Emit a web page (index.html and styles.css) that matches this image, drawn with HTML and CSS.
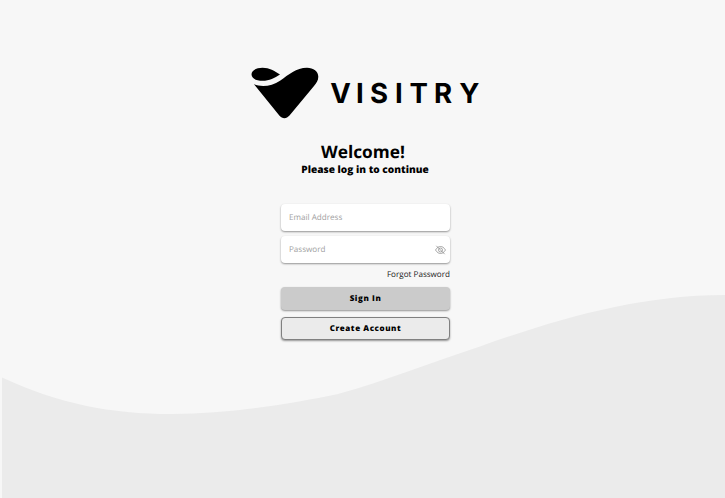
FILE: index.html
```
<!DOCTYPE html>
<html lang="en">
<head>
<meta charset="utf-8">
<title>Visitry – Log in</title>
<link rel="stylesheet" href="styles.css">
</head>
<body>
<svg class="wave" viewBox="0 0 725 498" aria-hidden="true"><path d="M2 377.5C60 404 110 414 172 414C230 414 290 404 338 394C385 381 430 363 480 346.5C560 318 640 295 725 295V498H2Z"/></svg>
<main class="login">
  <svg class="logo" viewBox="250 66 232 54" role="img" aria-label="Visitry">
    <path d="M251.5 74.3C251.5 70 257 67.7 262.5 67.7C269.5 67.7 274.5 71 280 74.4C274.5 77.7 269.5 80.8 262.5 80.8C256.5 80.8 251.5 78.5 251.5 74.3Z"/>
    <path d="M254 84.3C261.5 87.3 272 86.3 280 80.7C289 74.5 296 67.7 307 67.7C313.5 67.7 318.3 71.3 318.3 76.7C318.3 80.6 316.3 83.2 313.8 86.2L289.5 115.6C286.5 119 282.3 119 279.5 115.7Z"/>
    <text class="wordmark" y="103" x="330.3 355.9 370 394.9 409.4 434 459.3">VISITRY</text>
  </svg>
  <h1 class="title">Welcome!</h1>
  <p class="subtitle">Please log in to continue</p>
  <form class="form">
    <label class="field"><input class="input" type="text" placeholder="Email Address"></label>
    <label class="field"><input class="input" type="password" placeholder="Password">
      <svg class="eye" viewBox="0 0 11 10"><path d="M.5 5C2.2 2.3 3.8 1.5 5.5 1.5S8.8 2.3 10.5 5C8.8 7.7 7.2 8.5 5.5 8.5S2.2 7.7 .5 5ZM1.3.8L9.7 9.2"/><circle cx="5.5" cy="5" r="2"/></svg>
    </label>
    <a class="forgot">Forgot Password</a>
    <button class="button primary" type="button">Sign In</button>
    <button class="button secondary" type="button">Create Account</button>
  </form>
</main>
</body>
</html>
```
FILE: styles.css
```
* { box-sizing: border-box; }
body {
  margin: 0;
  height: 498px;
  overflow: hidden;
  background: #f7f7f7;
  color: #000;
  font-family: "Open Sans", sans-serif;
  text-rendering: geometricPrecision;
}
.wave {
  position: absolute;
  inset: 0;
  width: 725px;
  height: 498px;
  fill: #ebebeb;
}
.login {
  position: relative;
  display: flex;
  flex-direction: column;
  align-items: center;
  width: 730px;
  padding-top: 66px;
}
.logo { width: 232px; height: 54px; margin-left: 2px; }
.wordmark { font: 700 27.6px Inter, sans-serif; }
.title {
  margin: 21px 4px 0 0;
  font-size: 17.3px;
  line-height: 24px;
  font-weight: 700;
}
.subtitle {
  margin: -2px 0 0;
  font-size: 10.1px;
  line-height: 12px;
  font-weight: 800;
}
.form {
  display: flex;
  flex-direction: column;
  width: 169px;
  margin: 29px 0 0 1px;
}
.field {
  display: flex;
  align-items: center;
  height: 27px;
  margin-bottom: 5px;
  padding: 0 4px 0 8px;
  border-radius: 4px;
  background: #fff;
  box-shadow: 0 1px 2px rgba(0, 0, 0, .4);
}
.input {
  flex: 1;
  min-width: 0;
  height: 12px;
  padding: 0;
  border: 0;
  background: none;
  text-rendering: geometricPrecision;
  font: 400 8.1px "Open Sans", sans-serif;
}
.input::placeholder { color: #a0a0a0; opacity: 1; }
.eye {
  width: 11px;
  height: 10px;
  fill: none;
  stroke: #8c8c8c;
  stroke-width: .75;
}
.forgot {
  align-self: flex-end;
  margin-top: 1px;
  font-size: 8.1px;
  line-height: 11px;
  color: #222;
}
.button {
  height: 23px;
  padding: 0;
  border: 0;
  border-radius: 4px;
  color: #000;
  text-rendering: geometricPrecision;
  font: 800 8px/11px "Open Sans", sans-serif;
  letter-spacing: .58px;
  box-shadow: 0 1px 2px rgba(0, 0, 0, .4);
}
.primary { margin-top: 7px; background: #cbcbcb; }
.secondary {
  height: 23px;
  margin-top: 7px;
  border: 1px solid #808080;
  background: #ebebeb;
}
```
